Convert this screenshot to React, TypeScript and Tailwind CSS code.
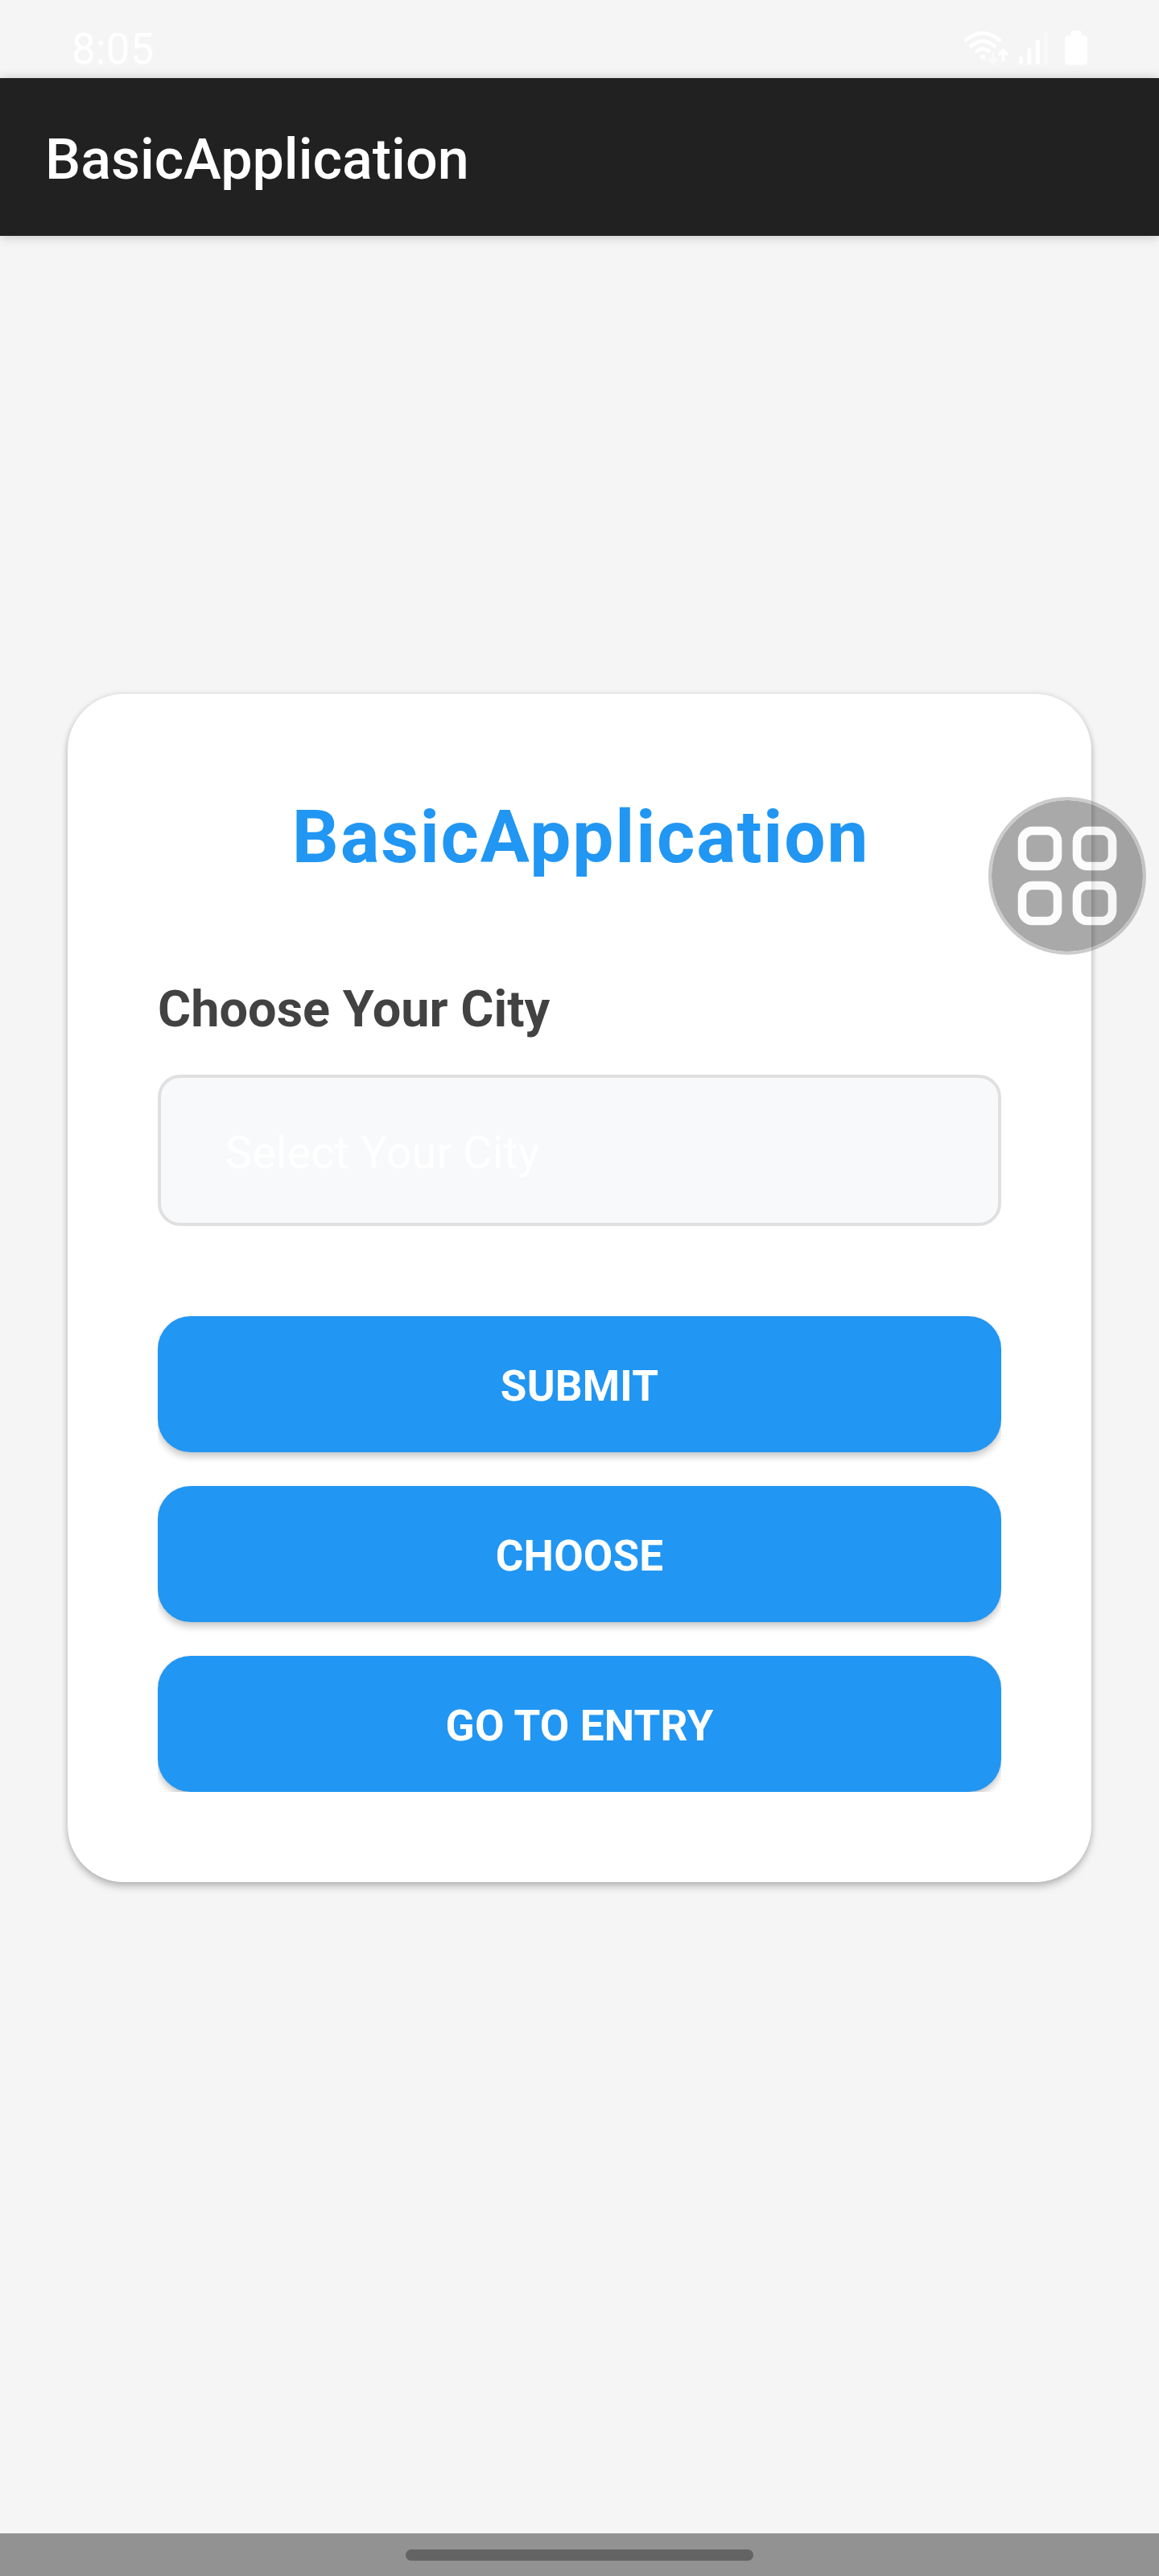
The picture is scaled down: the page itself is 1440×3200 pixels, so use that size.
const StatusIcons = () => (
  <svg className="h-[46px] w-[156px]" viewBox="1197 37 156 46" fill="none" strokeLinecap="round" strokeLinejoin="round">
    <g stroke="#fff" strokeWidth="4.4">
      <path d="M1199.8 50Q1221 32.5 1242 50" />
      <path d="M1206.3 57.3Q1221 45 1235.7 57.3" />
      <path d="M1213.3 63.6Q1221 57.4 1228.7 63.6" />
    </g>
    <circle cx="1221" cy="70.7" r="3" fill="#fff" />
    <path d="M1233.7 67V78M1229.6 74.2L1233.7 78.4L1237.9 74.2" stroke="#fafafa" strokeWidth="3.4" />
    <path d="M1246.5 74.5V63M1241.8 67.2L1246.5 62.6L1251.2 67.2" stroke="#fff" strokeWidth="3.4" />
    <g fill="#fff">
      <rect x="1266" y="70" width="5" height="10" rx="2.5" />
      <rect x="1276.3" y="59.5" width="5" height="20.5" rx="2.5" />
      <rect x="1286.8" y="49" width="5" height="31" rx="2.5" />
      <rect x="1297.3" y="40" width="5" height="40" rx="2.5" fill="#f8f8f8" />
      <rect x="1323" y="44" width="28" height="36.5" rx="4.5" />
      <rect x="1330.3" y="38" width="13.4" height="12" rx="3" />
    </g>
  </svg>
);

const ActionButton = ({ label }: { label: string }) => (
  <button className="flex h-[169px] w-full items-center justify-center rounded-[41px] bg-[#2196f3] pt-[5px] text-[53px] leading-[62px] font-bold tracking-[0.15px] text-white shadow-[0_6px_9px_rgba(0,0,0,0.2),0_0_3px_rgba(0,0,0,0.08)]">
    {label}
  </button>
);

const GridIcon = () => (
  <svg className="size-[124px]" viewBox="36 36 124 124" fill="none" stroke="#f9f9f9" strokeWidth="10.6">
    <rect x="42" y="42" width="44" height="44" rx="13" />
    <rect x="110" y="42" width="44" height="44" rx="13" />
    <rect x="42" y="110" width="44" height="44" rx="13" />
    <rect x="110" y="110" width="44" height="44" rx="13" />
  </svg>
);

export default function App() {
  return (
    <div className="relative flex h-[3200px] w-[1440px] flex-col bg-[#f5f5f5] font-[Roboto,sans-serif]">
      <div className="flex h-[97px] items-start justify-between pr-[87px] pl-[89px]">
        <span className="pt-[31px] text-[53px] leading-[60px] text-white">8:05</span>
        <div className="pt-[37px]">
          <StatusIcons />
        </div>
      </div>
      <header className="flex h-[196px] items-center bg-[#212121] px-[56px] pt-[6px] shadow-[0_1px_14px_rgba(0,0,0,0.2)]">
        <h1 className="text-[70px] leading-[82px] font-medium text-white">BasicApplication</h1>
      </header>

      <main className="flex flex-1 flex-col px-[84px] pt-[569px]">
        <section className="h-[1476px] rounded-[70px] bg-white p-[112px] shadow-[0_6px_10px_rgba(0,0,0,0.21),0_0_7px_rgba(0,0,0,0.12)]">
          <h2 className="pl-[3px] text-center text-[91px] leading-[132px] font-bold tracking-[1.8px] text-[#2196f3]">
            BasicApplication
          </h2>
          <p className="mt-[110px] text-[63px] leading-[75px] font-bold text-[#424242]">Choose Your City</p>
          <div className="mt-[44px] flex h-[188px] items-center rounded-[28px] border-4 border-[#e0e0e0] bg-[#f8f9fb] pt-[6px] pl-[80px] text-[56px] leading-[66px] text-white">
            Select Your City
          </div>
          <div className="mt-[104px] flex flex-col gap-[42px] overflow-hidden pt-[8px]">
            <ActionButton label="SUBMIT" />
            <ActionButton label="CHOOSE" />
            <ActionButton label="GO TO ENTRY" />
          </div>
        </section>
      </main>

      <button className="absolute top-[990px] left-[1228px] flex size-[196px] items-center justify-center rounded-full border-4 border-[#666] bg-black bg-clip-padding opacity-[0.333]">
        <GridIcon />
      </button>

      <footer className="flex h-[53px] justify-center bg-[#929292] pt-[20px]">
        <div className="h-[14px] w-[432px] rounded-full bg-[#646464]" />
      </footer>
    </div>
  );
}
